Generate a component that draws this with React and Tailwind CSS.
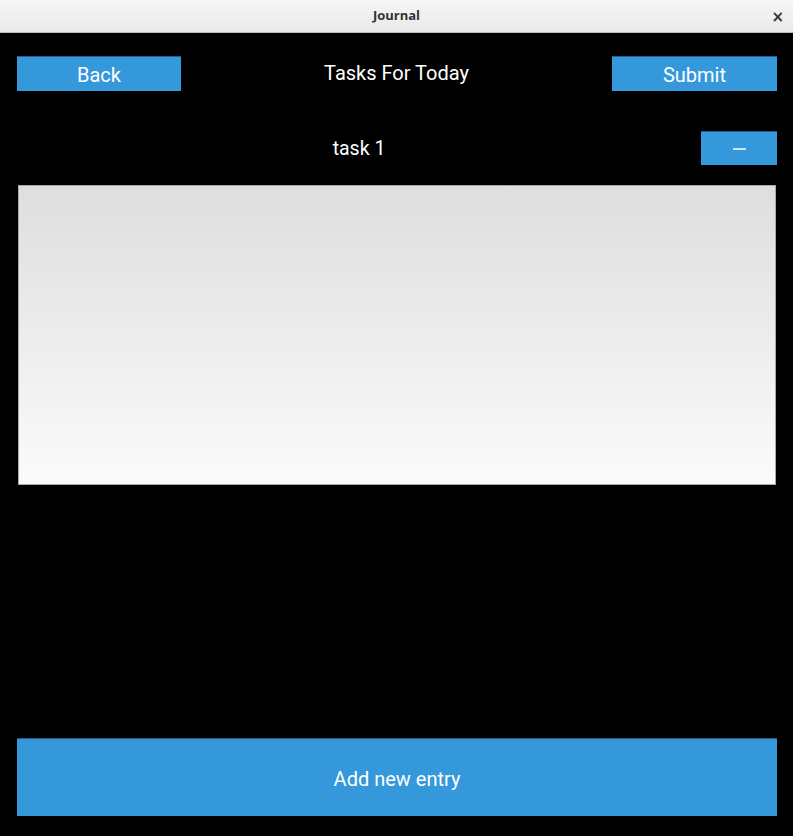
export default function App() {
  return (
    <div className="w-[793px] h-[836px] bg-black flex flex-col overflow-hidden" style={{ fontFamily: "Roboto, 'Liberation Sans', sans-serif" }}>
      <div className="h-[33px] shrink-0 bg-gradient-to-b from-[#f6f6f6] to-[#e9e9e9] border-b border-[#bdbdbd] flex items-center justify-center relative">
        <span className="text-[13px] font-bold text-[#2e3436]" style={{ fontFamily: "'Open Sans', 'DejaVu Sans', sans-serif" }}>Journal</span>
        <span className="absolute right-[9px] top-[6px] text-[15px] font-bold text-[#2e3436]" style={{ fontFamily: "'DejaVu Sans', sans-serif" }}>×</span>
      </div>
      <div className="flex-1 flex flex-col pl-[17px] pr-[16px] pb-[20px]">
        <div className="mt-[23px] h-[35px] flex items-center">
          <button className="w-[164px] h-[35px] bg-[#3598db] border-t border-[#1f5f8f] text-white text-[20px] leading-none flex items-center justify-center pt-[2px]">Back</button>
          <div className="flex-1 text-center text-white text-[20px] leading-none -mt-[1px]">Tasks For Today</div>
          <button className="w-[165px] h-[35px] bg-[#3598db] border-t border-[#1f5f8f] text-white text-[20px] leading-none flex items-center justify-center pt-[2px]">Submit</button>
        </div>
        <div className="mt-[40px] h-[34px] flex items-center">
          <div className="flex-1 text-center text-white text-[19.5px] leading-none pt-[2px]">task 1</div>
          <button className="w-[76px] h-[34px] bg-[#3598db] border-t border-[#1f5f8f] flex items-center justify-center">
            <span className="block w-[13px] h-[2px] bg-[#cde5f6]"></span>
          </button>
        </div>
        <div className="mt-[20px] mx-[1px] h-[300px] border border-[#a9a9a9] bg-gradient-to-b from-[#dedede] to-[#fbfbfb]"></div>
        <div className="flex-1"></div>
        <button className="h-[78px] bg-[#3598db] border-t border-[#1f5f8f] text-white text-[20px] flex items-center justify-center pt-[2px]">Add new entry</button>
      </div>
    </div>
  );
}
